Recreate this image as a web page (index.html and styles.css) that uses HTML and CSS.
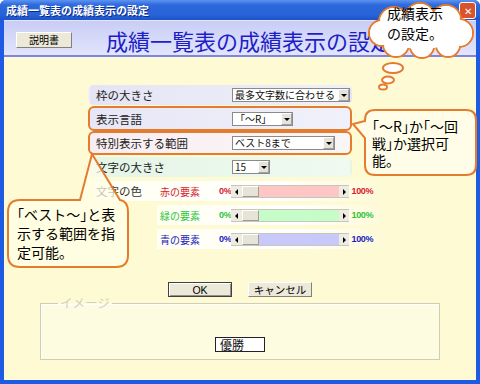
FILE: index.html
```html
<!DOCTYPE html>
<html lang="ja">

<head>
    <meta charset="UTF-8">
    <title>成績一覧表の成績表示の設定</title>
    <link rel="stylesheet" href="styles.css">
</head>

<body>
    <div class="window">
        <div class="titlebar">
            <span class="title">成績一覧表の成績表示の設定</span>
            <span class="close">✕</span>
        </div>

        <div class="frame">
            <div class="header">
                <button class="help-button">説明書</button>
                <h1>成績一覧表の成績表示の設定</h1>
            </div>

            <div class="content">
                <div class="form">
                    <div class="row row-frame">
                        <span class="label">枠の大きさ</span>
                        <div class="select s-wide"><span>最多文字数に合わせる</span><i class="drop"></i></div>
                    </div>
                    <div class="row row-lang marked">
                        <span class="label">表示言語</span>
                        <div class="select s-lang"><span>「〜R」</span><i class="drop"></i></div>
                    </div>
                    <div class="row row-range marked">
                        <span class="label">特別表示する範囲</span>
                        <div class="select s-range"><span>ベスト8まで</span><i class="drop"></i></div>
                    </div>
                    <div class="row row-size">
                        <span class="label">文字の大きさ</span>
                        <div class="select s-size"><span>15</span><i class="drop"></i></div>
                    </div>

                    <div class="color-row first">
                        <span class="color-title">文字の色</span>
                        <span class="color-name red">赤の要素</span>
                        <span class="pct red">0%</span>
                        <div class="scroll"><i class="arrow left"></i><i class="thumb"></i><i class="track track-red"></i><i class="arrow right"></i></div>
                        <span class="pct red">100%</span>
                    </div>
                    <div class="color-row">
                        <span class="color-name green">緑の要素</span>
                        <span class="pct green">0%</span>
                        <div class="scroll"><i class="arrow left"></i><i class="thumb"></i><i class="track track-green"></i><i class="arrow right"></i></div>
                        <span class="pct green">100%</span>
                    </div>
                    <div class="color-row">
                        <span class="color-name blue">青の要素</span>
                        <span class="pct blue">0%</span>
                        <div class="scroll"><i class="arrow left"></i><i class="thumb"></i><i class="track track-blue"></i><i class="arrow right"></i></div>
                        <span class="pct blue">100%</span>
                    </div>
                </div>

                <div class="actions">
                    <button class="btn btn-default">OK</button>
                    <button class="btn">キャンセル</button>
                </div>

                <fieldset class="preview">
                    <legend>イメージ</legend>
                    <div class="sample">優勝</div>
                </fieldset>
            </div>
        </div>

        <!-- callouts laid over the dialog -->
        <div class="note note-cloud">
            <svg width="116" height="92" viewBox="0 0 116 92">
                <g fill="#fff" stroke="#e57b2c" stroke-width="2">
                    <circle cx="30" cy="21" r="15"/>
                    <circle cx="56" cy="17" r="15"/>
                    <circle cx="82" cy="19" r="15"/>
                    <circle cx="95" cy="32" r="14"/>
                    <circle cx="84" cy="44" r="12"/>
                    <circle cx="58" cy="45" r="12"/>
                    <circle cx="32" cy="43" r="13"/>
                    <circle cx="18" cy="32" r="13"/>
                    <ellipse cx="29" cy="67" rx="10" ry="5"/>
                    <ellipse cx="24" cy="79" rx="6" ry="3.5"/>
                    <ellipse cx="19" cy="86" rx="4" ry="2.5"/>
                </g>
                <g fill="#fff">
                    <circle cx="30" cy="21" r="14"/>
                    <circle cx="56" cy="17" r="14"/>
                    <circle cx="82" cy="19" r="14"/>
                    <circle cx="95" cy="32" r="13"/>
                    <circle cx="84" cy="44" r="11"/>
                    <circle cx="58" cy="45" r="11"/>
                    <circle cx="32" cy="43" r="12"/>
                    <circle cx="18" cy="32" r="12"/>
                    <ellipse cx="57" cy="31" rx="38" ry="17"/>
                </g>
            </svg>
            <p class="note-text cloud-text">成績表示<br>の設定。</p>
        </div>

        <div class="note note-lang">
            <svg width="132" height="74" viewBox="0 0 132 74">
                <path d="M27 4 H118 Q128 4 128 14 V59 Q128 69 118 69 H27 Q17 69 17 59 V32 L5 18 L17 15 V14 Q17 4 27 4 Z"
                      fill="#fffde8" stroke="#e57b2c" stroke-width="2"/>
            </svg>
            <p class="note-text lang-text">「〜R」か「〜回<br>戦」か選択可<br>能。</p>
        </div>

        <div class="note note-range">
            <svg width="126" height="120" viewBox="0 0 126 120">
                <path d="M14 50 H74 L86 4 L114 50 Q122 51 122 62 V105 Q122 117 110 117 H14 Q2 117 2 105 V62 Q2 50 14 50 Z"
                      fill="rgba(255,253,232,0.72)" stroke="#e57b2c" stroke-width="2"/>
            </svg>
            <p class="note-text range-text">「ベスト〜」と表<br>示する範囲を指<br>定可能。</p>
        </div>
    </div>
</body>
</html>
```

FILE: styles.css
```css
html, body {
    margin: 0;
    font-family: "Noto Sans CJK JP", sans-serif;
}

.window {
    position: relative;
    width: 480px;
    height: 384px;
    box-sizing: border-box;
    display: flex;
    flex-direction: column;
    background-color: #1f5ae3;
    border-radius: 6px 6px 0 0;
    overflow: hidden;
}

/* title bar */
.titlebar {
    flex: none;
    height: 20px;
    display: flex;
    align-items: center;
    justify-content: space-between;
    padding: 0 4px 0 6px;
    background: linear-gradient(#5d93f2, #2d68dc 25%, #2862d8 75%, #1c52c6);
}

.title {
    color: #fff;
    font-size: 11px;
    font-weight: bold;
    text-shadow: 1px 1px 0 #0a2a8a;
}

.close {
    width: 15px;
    height: 15px;
    border: 1px solid #fff;
    border-radius: 3px;
    background-color: #d9532b;
    color: #fff;
    font-size: 10px;
    line-height: 15px;
    text-align: center;
}

.frame {
    flex: 1;
    display: flex;
    flex-direction: column;
    margin: 0 4px 4px;
}

/* header */
.header {
    flex: none;
    height: 37px;
    display: flex;
    align-items: center;
    gap: 34px;
    padding: 3px 0 0 12px;
    box-sizing: border-box;
    border-top: 1px solid #e4e8ff;
    border-bottom: 2px solid #7c84e4;
    background: linear-gradient(#c9cdf5, #e2e5fb);
}

.help-button {
    width: 56px;
    height: 16px;
    padding: 0;
    border: 1px solid;
    border-color: #fff #808080 #808080 #fff;
    background-color: #ece9d8;
    font-family: "Noto Sans CJK JP", sans-serif;
    font-size: 10px;
    line-height: 12px;
    color: #000;
}

.header h1 {
    margin: 0;
    font-size: 22px;
    font-weight: normal;
    line-height: 26px;
    color: #1e1ec8;
    white-space: nowrap;
}

/* content */
.content {
    flex: 1;
    display: flex;
    flex-direction: column;
    background-color: #fdfad4;
}

.form {
    display: flex;
    flex-direction: column;
    margin: 28px 0 0 84px;
}

.row {
    display: flex;
    align-items: center;
    width: 264px;
    height: 20px;
    box-sizing: border-box;
    padding-left: 6px;
    border: 2px solid transparent;
    border-radius: 6px;
}

.row.marked {
    border-color: #e57b2c;
}

.row-frame {
    background: linear-gradient(to right, #e4e4f5, #f0f0fa);
}

.row-lang {
    height: 25px;
    margin-top: 1px;
    background: linear-gradient(to right, #e6e6f6, #f1f1fb);
}

.row-range {
    height: 24px;
    background: linear-gradient(to right, #f8eef2, #fbf6f6);
}

.row-size {
    margin-top: 2px;
    background: linear-gradient(to right, #e4f5e6, #f0faf0);
}

.label {
    width: 136px;
    flex: none;
    font-size: 11.5px;
    color: #222;
    white-space: nowrap;
}

.select {
    display: flex;
    align-items: center;
    justify-content: space-between;
    height: 14px;
    box-sizing: border-box;
    border: 1px solid #8a8a8a;
    background-color: #fff;
}

.select span {
    padding-left: 2px;
    font-size: 10px;
    line-height: 12px;
    white-space: nowrap;
    color: #111;
}

.s-wide { width: 118px; }
.s-lang { width: 61px; }
.s-range { width: 103px; }
.s-size { width: 38px; }

.drop {
    position: relative;
    width: 11px;
    height: 12px;
    box-sizing: border-box;
    border: 1px solid;
    border-color: #fff #a0a0a0 #a0a0a0 #fff;
    background-color: #e6e4da;
}

.drop::after {
    content: "";
    position: absolute;
    left: 2px;
    top: 4px;
    border-left: 3px solid transparent;
    border-right: 3px solid transparent;
    border-top: 3px solid #000;
}

/* colour rows */
.color-row {
    display: flex;
    align-items: center;
    height: 20px;
    width: 233px;
    margin: 4px 0 0 69px;
    padding-left: 3px;
    box-sizing: border-box;
    background: linear-gradient(to right, #fffff2, #ffffff 60%, rgba(255, 255, 255, 0));
}

.color-row.first {
    width: 295px;
    margin-left: 7px;
    padding-left: 1px;
}

.color-title {
    width: 64px;
    flex: none;
    font-size: 11.5px;
    color: #333;
}

.color-name {
    width: 59px;
    flex: none;
    font-size: 10px;
}

.pct {
    font-family: "Liberation Sans", sans-serif;
    font-size: 9px;
    font-weight: bold;
    letter-spacing: -0.3px;
}

.pct:first-of-type {
    width: 13px;
}

.red { color: #d8202c; }
.green { color: #2cc43a; }
.blue { color: #1c1cbc; }

.scroll {
    display: flex;
    width: 118px;
    height: 13px;
    margin-right: 2px;
    box-sizing: border-box;
    border-top: 1px solid #c8c6b8;
    border-bottom: 1px solid #c8c6b8;
}

.arrow {
    position: relative;
    width: 11px;
    flex: none;
    background-color: #eeece2;
}

.arrow.right {
    width: 10px;
}

.arrow::after {
    content: "";
    position: absolute;
    top: 3px;
    border-top: 3px solid transparent;
    border-bottom: 3px solid transparent;
}

.arrow.left::after {
    left: 4px;
    border-right: 3px solid #000;
}

.arrow.right::after {
    left: 4px;
    border-left: 3px solid #000;
}

.thumb {
    width: 17px;
    flex: none;
    box-sizing: border-box;
    border: 1px solid;
    border-color: #fff #a09e90 #a09e90 #fff;
    background-color: #e6e4d8;
}

.track {
    flex: 1;
}

.track-red { background-color: #ffc6c6; }
.track-green { background-color: #c6fcc8; }
.track-blue { background-color: #c8c8fa; }

/* buttons */
.actions {
    display: flex;
    justify-content: center;
    gap: 16px;
    margin-top: 33px;
}

.btn {
    width: 64px;
    height: 15px;
    padding: 0;
    box-sizing: border-box;
    border: 1px solid;
    border-color: #fff #808080 #808080 #fff;
    background-color: #ece9d8;
    font-family: "Liberation Sans", "Noto Sans CJK JP", sans-serif;
    font-size: 10.5px;
    line-height: 12px;
    color: #000;
}

.btn-default {
    border-color: #404040;
    box-shadow: inset 1px 1px 0 #fff, inset -1px -1px 0 #909090;
}

/* preview */
.preview {
    margin: 0 36px;
    padding: 0 0 7px;
    border: 1px solid #cfcdb8;
    box-shadow: inset 1px 1px 0 #fff;
    background-color: #fdfbe0;
}

.preview legend {
    margin-left: 17px;
    padding: 0 2px;
    font-size: 12.5px;
    line-height: 12px;
    color: #d2d0c0;
}

.sample {
    width: 50px;
    height: 15px;
    margin: 28px auto 0;
    box-sizing: border-box;
    padding-left: 4px;
    border: 1px solid #222;
    background-color: #fff;
    font-size: 12px;
    line-height: 13px;
    color: #111;
}

/* callouts */
.note {
    position: absolute;
}

.note svg {
    display: block;
}

.note-text {
    position: absolute;
    margin: 0;
    font-size: 14px;
    color: #000;
    white-space: nowrap;
}

.note-cloud {
    left: 364px;
    top: 1px;
}

.cloud-text {
    left: 23px;
    top: 2px;
    line-height: 20px;
}

.note-lang {
    left: 348px;
    top: 106px;
}

.lang-text {
    left: 24px;
    top: 12px;
    line-height: 17px;
    font-feature-settings: "halt";
}

.note-range {
    left: 6px;
    top: 150px;
}

.range-text {
    left: 11px;
    top: 55px;
    line-height: 19px;
    font-feature-settings: "halt";
}
```
